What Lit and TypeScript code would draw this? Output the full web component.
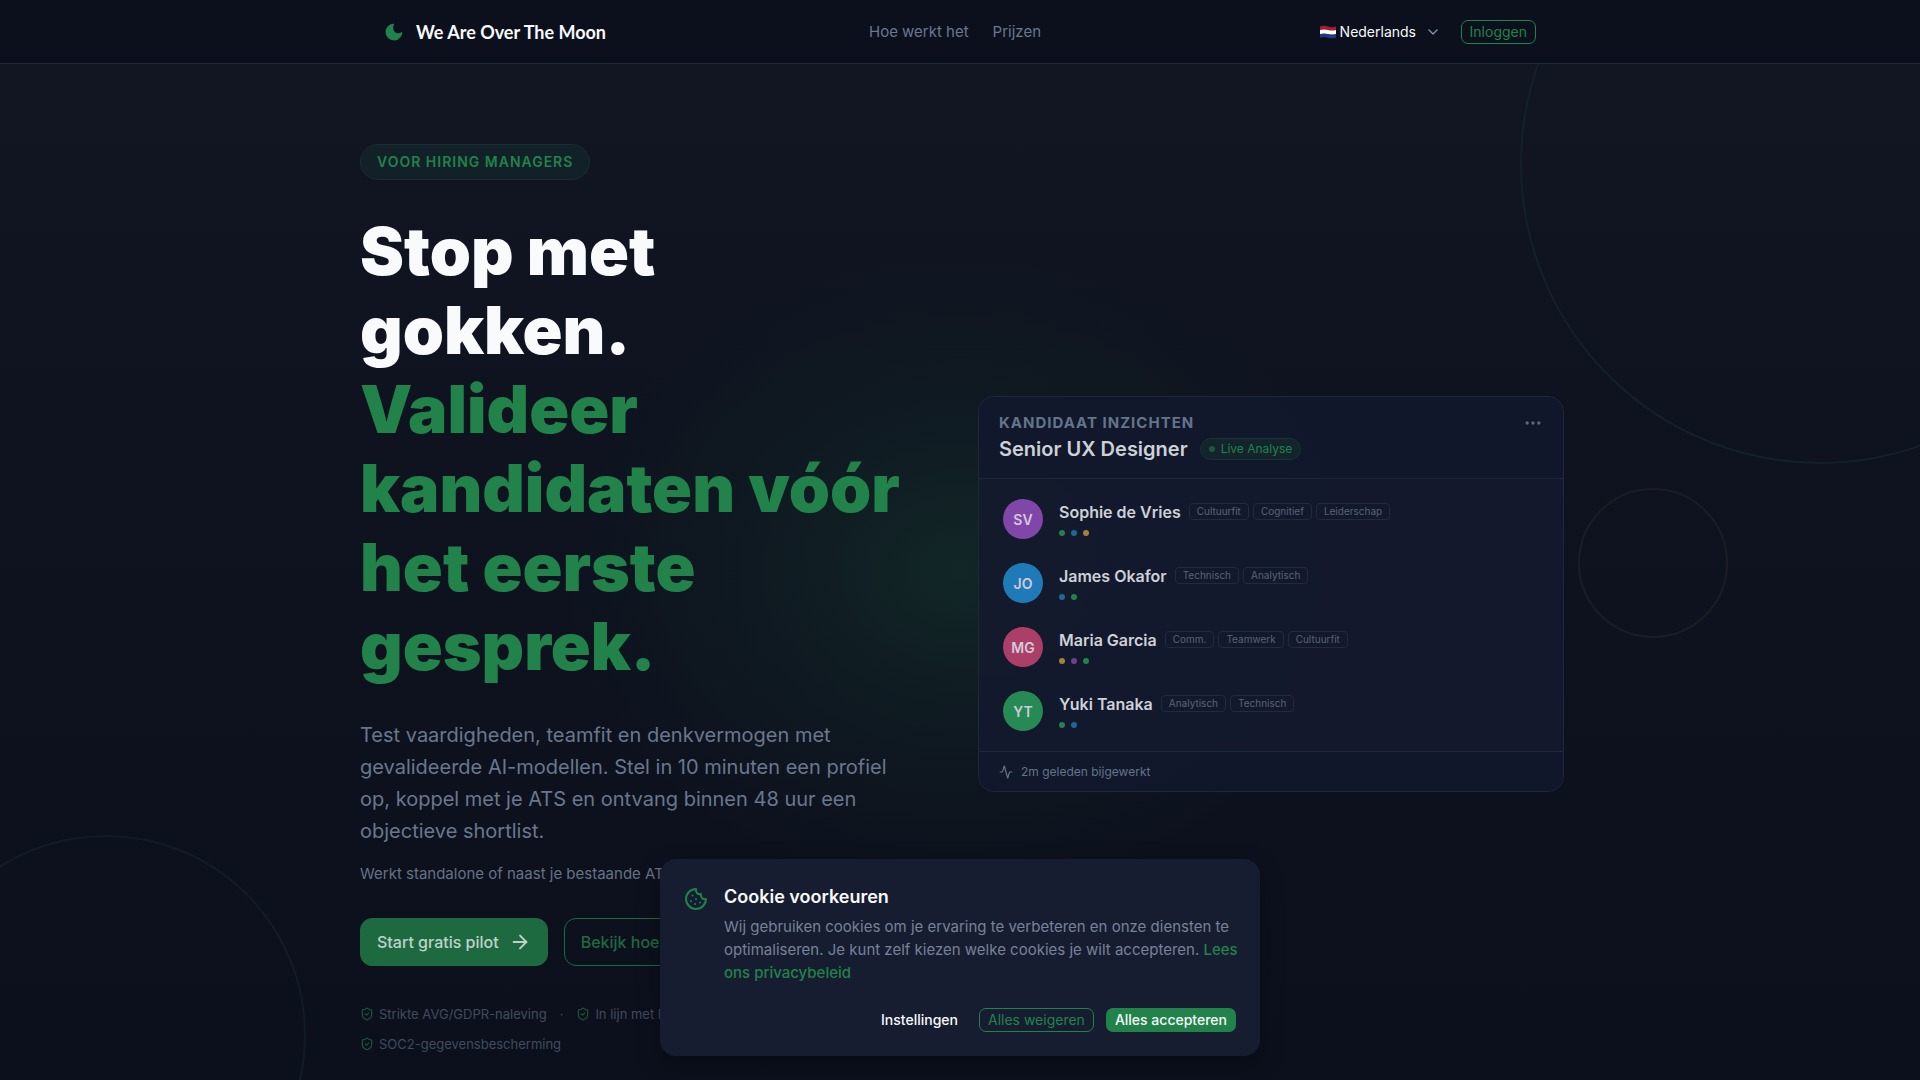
import { LitElement, html, svg, css, nothing } from "lit";
import { customElement, property } from "lit/decorators.js";

const strokeIcon = (cls: string, body: unknown, width = 2) => html`<svg
  class=${cls}
  viewBox="0 0 24 24"
  fill="none"
  stroke="currentColor"
  stroke-width=${width}
  stroke-linecap="round"
  stroke-linejoin="round"
  aria-hidden="true"
>${body}</svg>`;

const shieldCheck = svg`<path d="M20 13c0 5-3.5 7.5-7.66 8.95a1 1 0 0 1-.67-.01C7.5 20.5 4 18 4 13V6a1 1 0 0 1 1-1c2 0 4.5-1.2 6.24-2.72a1.17 1.17 0 0 1 1.52 0C14.51 3.81 17 5 19 5a1 1 0 0 1 1 1z"/><path d="m9 12 2 2 4-4"/>`;
const arrowRight = svg`<path d="M5 12h14"/><path d="m12 5 7 7-7 7"/>`;
const chevronDown = svg`<path d="m6 9 6 6 6-6"/>`;
const activity = svg`<path d="M22 12h-2.48a2 2 0 0 0-1.93 1.46l-2.35 8.36a.25.25 0 0 1-.48 0L9.24 2.18a.25.25 0 0 0-.48 0l-2.35 8.36A2 2 0 0 1 4.49 12H2"/>`;
const ellipsis = svg`<circle cx="12" cy="12" r="1"/><circle cx="19" cy="12" r="1"/><circle cx="5" cy="12" r="1"/>`;
const cookie = svg`<path d="M12 2a10 10 0 1 0 10 10 4 4 0 0 1-5-5 4 4 0 0 1-5-5"/><path d="M8.5 8.5v.01"/><path d="M16 15.5v.01"/><path d="M12 12v.01"/><path d="M11 17v.01"/><path d="M7 14v.01"/>`;

const base = css`
  * {
    box-sizing: border-box;
  }
  a {
    color: inherit;
    text-decoration: none;
  }
  button,
  select {
    font: inherit;
    color: inherit;
    background: none;
    border: 0;
    margin: 0;
    padding: 0;
  }
  h1,
  h2,
  p,
  ul {
    margin: 0;
    padding: 0;
  }
  ul {
    list-style: none;
  }
  svg {
    display: block;
    flex: none;
  }
`;

@customElement("site-header")
export class SiteHeader extends LitElement {
  static styles = [
    base,
    css`
      :host {
        display: block;
        background: #0c101d;
        border-bottom: 1px solid #1e293b;
        position: relative;
        z-index: 2;
      }
      .bar {
        display: grid;
        grid-template-columns: 1fr auto 1fr;
        align-items: center;
        max-width: 1200px;
        height: 63px;
        margin: 0 auto;
        padding: 0 24px;
      }
      .brand {
        display: flex;
        align-items: center;
        gap: 12px;
        font: 700 18px/28px Lato, sans-serif;
        color: #f8fafc;
      }
      .moon {
        width: 20px;
        height: 20px;
        fill: #21834a;
      }
      nav {
        display: flex;
        gap: 24px;
        padding-right: 10px;
        color: #6b778d;
        font-size: 15px;
      }
      .tools {
        display: flex;
        align-items: center;
        justify-content: flex-end;
        gap: 20px;
      }
      .lang {
        display: flex;
        align-items: center;
        gap: 4px;
        color: #f8fafc;
        font-size: 14px;
      }
      .flag {
        width: 16px;
        height: 14px;
      }
      .lang select {
        appearance: none;
        line-height: 20px;
      }
      .chevron {
        width: 16px;
        height: 16px;
        color: #8592a8;
        margin-left: 4px;
      }
      .login {
        border: 1px solid #21834a;
        border-radius: 7px;
        color: #21834a;
        font-size: 14px;
        line-height: 22px;
        padding: 0 8px;
      }
    `,
  ];

  render() {
    return html`<header class="bar">
      <a class="brand" href="#">
        <svg class="moon" viewBox="0 0 20 20" aria-hidden="true">
          <path d="M10.3 1.7A8.4 8.4 0 1 0 18.3 9.5C15.5 12.5 9.5 11.5 9.2 6.5 9.1 4.5 9.6 3 10.3 1.7z" />
        </svg>
        We Are Over The Moon
      </a>
      <nav>
        <a href="#hoe">Hoe werkt het</a>
        <a href="#prijzen">Prijzen</a>
      </nav>
      <div class="tools">
        <div class="lang">
          <svg class="flag" viewBox="0 0 16 14" aria-hidden="true">
            <path fill="#a31d2c" d="M0 1.5Q4 0 8 1.5T16 1.5V5.5Q12 6.5 8 5.5T0 5.5z" />
            <path fill="#fff" d="M0 5Q4 4 8 5T16 5V9.3Q12 10.3 8 9.3T0 9.3z" />
            <path fill="#1e3a80" d="M0 9Q4 8 8 9T16 9V12.7Q12 14 8 12.7T0 12.7z" />
          </svg>
          <select aria-label="Taal">
            <option>Nederlands</option>
          </select>
          ${strokeIcon("chevron", chevronDown)}
        </div>
        <button class="login">Inloggen</button>
      </div>
    </header>`;
  }
}

interface Candidate {
  initials: string;
  name: string;
  color: string;
  tags: string[];
  dots: string[];
}

const GREEN = "#26804d";
const BLUE = "#22659b";
const GOLD = "#a0843a";
const PURPLE = "#6f3f96";

const candidates: Candidate[] = [
  { initials: "SV", name: "Sophie de Vries", color: "#8046a8", tags: ["Cultuurfit", "Cognitief", "Leiderschap"], dots: [GREEN, BLUE, GOLD] },
  { initials: "JO", name: "James Okafor", color: "#217ab8", tags: ["Technisch", "Analytisch"], dots: [BLUE, GREEN] },
  { initials: "MG", name: "Maria Garcia", color: "#ac3f68", tags: ["Comm.", "Teamwerk", "Cultuurfit"], dots: [GOLD, PURPLE, GREEN] },
  { initials: "YT", name: "Yuki Tanaka", color: "#258a54", tags: ["Analytisch", "Technisch"], dots: [GREEN, BLUE] },
];

@customElement("insight-card")
export class InsightCard extends LitElement {
  @property({ attribute: false }) items: Candidate[] = [];

  static styles = [
    base,
    css`
      :host {
        display: block;
        background: rgba(20, 26, 46, 0.9);
        border: 1px solid #1d293b;
        border-radius: 16px;
        overflow: hidden;
      }
      .head {
        display: flex;
        justify-content: space-between;
        align-items: flex-start;
        padding: 14px 20px 15px;
        border-bottom: 1px solid #1d293b;
        background: rgba(17, 24, 43, 0.6);
      }
      .label {
        font-size: 15px;
        line-height: 24px;
        font-weight: 700;
        letter-spacing: 1px;
        text-transform: uppercase;
        color: #64748b;
      }
      .title {
        display: flex;
        align-items: center;
        gap: 12px;
      }
      h2 {
        font-size: 20px;
        line-height: 28px;
        font-weight: 600;
        color: #cdd1d8;
      }
      .live {
        display: flex;
        align-items: center;
        gap: 6px;
        padding: 0 8px;
        border: 1px solid #17352f;
        border-radius: 11px;
        background: #13242c;
        color: #21834a;
        font-size: 12px;
        line-height: 20px;
      }
      .pulse {
        width: 6px;
        height: 6px;
        border-radius: 50%;
        background: #1d5a3d;
      }
      .more {
        color: #5b687e;
        margin-top: 2px;
      }
      .more svg {
        width: 20px;
        height: 20px;
      }
      ul {
        padding: 8px 24px;
      }
      li {
        display: flex;
        align-items: center;
        gap: 16px;
        height: 64px;
      }
      .avatar {
        display: grid;
        place-items: center;
        flex: none;
        width: 40px;
        height: 40px;
        border-radius: 50%;
        font-size: 14px;
        font-weight: 600;
        color: #d0cbda;
      }
      .info {
        padding-bottom: 3px;
      }
      .line {
        display: flex;
        align-items: center;
        gap: 8px;
      }
      .name {
        font-size: 16px;
        line-height: 24px;
        font-weight: 600;
        color: #cdd1d8;
      }
      .tags {
        display: flex;
        gap: 4px;
      }
      .tag {
        border: 1px solid #202a40;
        border-radius: 4px;
        padding: 0 7px;
        font-size: 10px;
        line-height: 15px;
        color: #576379;
      }
      .dots {
        display: flex;
        gap: 6px;
        padding-top: 6px;
      }
      .dot {
        width: 6px;
        height: 6px;
        border-radius: 50%;
      }
      .foot {
        display: flex;
        align-items: center;
        gap: 8px;
        padding: 11px 20px;
        border-top: 1px solid #1d293b;
        background: rgba(17, 24, 43, 0.6);
        color: #64748b;
        font-size: 12px;
        line-height: 17px;
      }
      .activity {
        width: 14px;
        height: 14px;
      }
    `,
  ];

  render() {
    return html`
      <div class="head">
        <div>
          <p class="label">Kandidaat inzichten</p>
          <div class="title">
            <h2>Senior UX Designer</h2>
            <span class="live"><span class="pulse"></span>Live Analyse</span>
          </div>
        </div>
        <button class="more" aria-label="Meer opties">${strokeIcon("", ellipsis)}</button>
      </div>
      <ul>
        ${this.items.map(
          (c) => html`<li>
            <span class="avatar" style="background:${c.color}">${c.initials}</span>
            <div class="info">
              <div class="line">
                <span class="name">${c.name}</span>
                <span class="tags">${c.tags.map((t) => html`<span class="tag">${t}</span>`)}</span>
              </div>
              <div class="dots">${c.dots.map((d) => html`<span class="dot" style="background:${d}"></span>`)}</div>
            </div>
          </li>`
        )}
      </ul>
      <div class="foot">${strokeIcon("activity", activity)}2m geleden bijgewerkt</div>
    `;
  }
}

@customElement("cookie-dialog")
export class CookieDialog extends LitElement {
  static styles = [
    base,
    css`
      :host {
        display: block;
        background: #171d30;
        border-radius: 16px;
        padding: 24px 16px 24px 24px;
        box-shadow: 0 8px 24px rgba(0, 0, 0, 0.3);
      }
      .body {
        display: flex;
        gap: 16px;
      }
      .cookie {
        width: 24px;
        height: 24px;
        color: #21834a;
        margin-top: 4px;
      }
      h2 {
        font-size: 18px;
        line-height: 27px;
        font-weight: 600;
        color: #f8fafc;
      }
      p {
        margin-top: 5px;
        font-size: 15px;
        line-height: 23px;
        color: #76829a;
      }
      p a {
        color: #21834a;
        font-weight: 500;
      }
      .actions {
        display: flex;
        justify-content: flex-end;
        gap: 12px;
        margin-top: 24px;
        padding-right: 8px;
      }
      button {
        font-size: 14px;
        line-height: 22px;
        font-weight: 500;
        padding: 0 8px;
        border: 1px solid transparent;
        border-radius: 7px;
        color: #f8fafc;
      }
      .reject {
        border-color: #21834a;
        color: #21834a;
        font-weight: 400;
      }
      .accept {
        background: #21834a;
      }
    `,
  ];

  render() {
    return html`
      <div class="body">
        ${strokeIcon("cookie", cookie)}
        <div>
          <h2>Cookie voorkeuren</h2>
          <p>
            Wij gebruiken cookies om je ervaring te verbeteren en onze diensten te optimaliseren. Je kunt zelf kiezen
            welke cookies je wilt accepteren. <a href="#privacy">Lees ons privacybeleid</a>
          </p>
        </div>
      </div>
      <div class="actions">
        <button>Instellingen</button>
        <button class="reject">Alles weigeren</button>
        <button class="accept">Alles accepteren</button>
      </div>
    `;
  }
}

@customElement("app-root")
export class AppRoot extends LitElement {
  static styles = [
    base,
    css`
      :host {
        display: block;
        position: relative;
        height: 100vh;
        overflow: hidden;
        background: #0f131f;
        color: #f8fafc;
        font-family: Inter, sans-serif;
      }
      .hero {
        position: relative;
        min-height: calc(100vh - 64px);
        background: linear-gradient(180deg, #121622 0%, #0e131f 35%, #0c101c 100%);
      }
      .art {
        position: absolute;
        inset: 0;
        overflow: hidden;
      }
      .glow {
        position: absolute;
        left: 50%;
        top: 50%;
        width: 800px;
        height: 640px;
        transform: translate(-50%, -50%);
        background: radial-gradient(closest-side, rgba(22, 58, 46, 0.5), rgba(18, 42, 40, 0.3) 50%, transparent);
      }
      .ring {
        position: absolute;
        border: 2px solid #13212a;
        border-radius: 50%;
      }
      .ring-a {
        width: 600px;
        height: 600px;
        top: -200px;
        right: -200px;
      }
      .ring-b {
        width: 400px;
        height: 400px;
        bottom: -155px;
        left: -94px;
        border-color: #121c27;
      }
      .ring-c {
        width: 150px;
        height: 150px;
        top: 424px;
        right: 192px;
        border-color: #1b1d23;
      }
      .content {
        position: relative;
        display: grid;
        grid-template-columns: 554px 1fr;
        gap: 64px;
        align-items: center;
        max-width: 1208px;
        margin: 0 auto;
        padding: 80px 0 0 4px;
      }
      insight-card {
        margin-bottom: 10px;
      }
      .badge {
        display: inline-block;
        border: 1px solid #15302f;
        border-radius: 18px;
        background: #122127;
        color: #21834a;
        font-size: 14px;
        font-weight: 600;
        line-height: 34px;
        letter-spacing: 1px;
        padding: 0 16px;
        text-transform: uppercase;
      }
      h1 {
        margin-top: 32px;
        font-size: 66px;
        line-height: 79px;
        font-weight: 900;
      }
      h1 span {
        display: block;
        color: #21834a;
      }
      .lead {
        margin-top: 33px;
        font-size: 20px;
        line-height: 32px;
        color: #6b778d;
      }
      .note {
        margin-top: 15px;
        font-size: 15px;
        line-height: 24px;
        color: #667187;
      }
      .cta {
        display: flex;
        gap: 16px;
        margin-top: 32px;
      }
      .cta a {
        display: flex;
        align-items: center;
        gap: 10px;
        height: 48px;
        padding: 0 16px;
        border: 1px solid #1e6a40;
        border-radius: 12px;
        font-size: 16px;
        font-weight: 500;
        color: #1e6a40;
      }
      .cta .primary {
        background: #1e6a40;
        color: #bfd2ca;
      }
      .arrow {
        width: 22px;
        height: 22px;
      }
      .trust {
        display: flex;
        flex-wrap: wrap;
        gap: 10px 13px;
        margin-top: 38px;
        font-size: 13px;
        line-height: 20px;
        color: #414b5e;
      }
      .trust li {
        display: flex;
        align-items: center;
        gap: 5px;
      }
      .shield {
        width: 14px;
        height: 14px;
        color: #1b5738;
      }
      cookie-dialog {
        position: absolute;
        left: 50%;
        bottom: 24px;
        width: 600px;
        transform: translateX(-50%);
        z-index: 3;
      }
    `,
  ];

  private trust = ["Strikte AVG/GDPR-naleving", "In lijn met EU AI Act", "SOC2-gegevensbescherming"];

  render() {
    return html`
      <site-header></site-header>
      <main class="hero">
        <div class="art">
          <div class="glow"></div>
          <div class="ring ring-a"></div>
          <div class="ring ring-b"></div>
          <div class="ring ring-c"></div>
        </div>
        <div class="content">
          <section>
            <div class="badge">Voor hiring managers</div>
            <h1>Stop met<br />gokken. <span>Valideer kandidaten vóór het eerste gesprek.</span></h1>
            <p class="lead">
              Test vaardigheden, teamfit en denkvermogen met gevalideerde AI-modellen. Stel in 10 minuten een profiel
              op, koppel met je ATS en ontvang binnen 48 uur een objectieve shortlist.
            </p>
            <p class="note">Werkt standalone of naast je bestaande ATS.</p>
            <div class="cta">
              <a class="primary" href="#pilot">Start gratis pilot ${strokeIcon("arrow", arrowRight)}</a>
              <a href="#hoe">Bekijk hoe het werkt</a>
            </div>
            <ul class="trust">
              ${this.trust.map(
                (t, i) => html`<li>${strokeIcon("shield", shieldCheck)}${t}</li>
                  ${i === 0 ? html`<li>·</li>` : nothing}`
              )}
            </ul>
          </section>
          <insight-card .items=${candidates}></insight-card>
        </div>
      </main>
      <cookie-dialog role="dialog" aria-label="Cookie voorkeuren"></cookie-dialog>
    `;
  }
}
